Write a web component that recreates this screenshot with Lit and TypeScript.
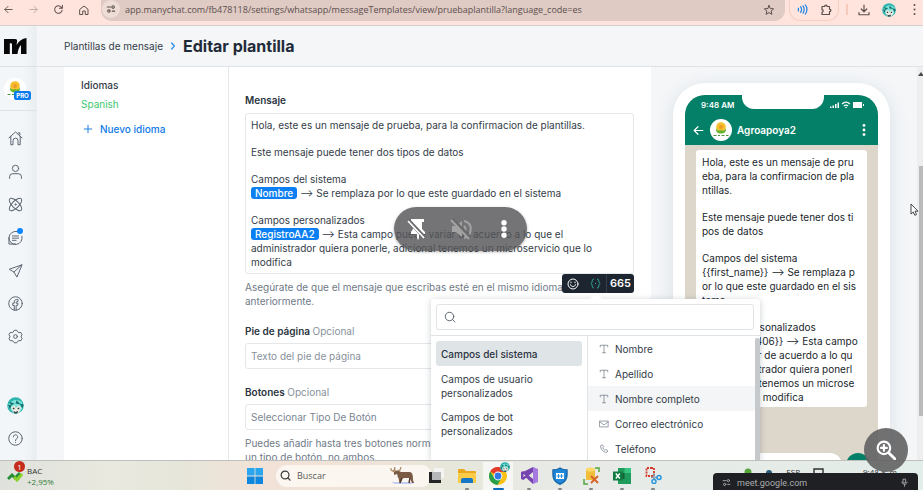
import { LitElement, html, css, svg } from "lit";
import { customElement } from "lit/decorators.js";

const line = (size: number, body: unknown, width = 1.5) => html`<svg
  width=${size} height=${size} viewBox="0 0 24 24" fill="none" stroke="currentColor"
  stroke-width=${width} stroke-linecap="round" stroke-linejoin="round" aria-hidden="true">${body}</svg>`;

const shapes = {
  back: svg`<path d="M20 12H4M11 5l-7 7 7 7"/>`,
  forward: svg`<path d="M4 12h16M13 5l7 7-7 7"/>`,
  reload: svg`<path d="M19.5 9A8.2 8.2 0 1 0 20 13.500M20.500 3v6.500H14"/>`,
  house: svg`<path d="M4 10.500 12 4l8 6.500V21h-5.500v-7h-5v7H4z"/>`,
  tune: svg`<path d="M3 7h8M15 17h6"/><circle cx="17" cy="7" r="3"/><circle cx="7" cy="17" r="3"/>`,
  star: svg`<path d="m12 3 2.700 6.100 6.600.6-5 4.400 1.500 6.500L12 17.200l-5.800 3.400 1.500-6.500-5-4.400 6.600-.6z"/>`,
  puzzle: svg`<path d="M4 5h5.500c-.6-3.500 5-3.500 4.500 0H19v5.500c3.500-.5 3.500 5 0 4.500V21H4v-5c3.200.3 3.200-5 0-4.700z"/>`,
  download: svg`<path d="M12 2v13M6.500 10l5.500 5.500L17.500 10M2 17v4.500h20V17"/>`,
  home: svg`<path d="M1.500 11 12 1.500 22.500 11M4.500 8.500V22H8v-6.500a4 4 0 0 1 8 0V22h3.500V8.500M16.500 3H19v3"/>`,
  person: svg`<circle cx="12" cy="7" r="5"/><path d="M2.500 23v-2.500a5 5 0 0 1 5-5h9a5 5 0 0 1 5 5V23"/>`,
  atom: svg`<ellipse cx="12" cy="12" rx="13" ry="5.500" transform="rotate(45 12 12)"/><ellipse cx="12" cy="12" rx="13" ry="5.500" transform="rotate(-45 12 12)"/><circle cx="12" cy="12" r="1"/>`,
  chat: svg`<path d="M14 2.300A10.500 10.500 0 1 0 22.300 10M1.500 12v10.500H12M7 9.500h10M7 13h10M7 16.500h6"/>`,
  plane: svg`<path d="M22 3 2 10l7.500 4.500L14 22zM22 3 9.500 14.500"/>`,
  facebook: svg`<circle cx="12" cy="12" r="10.800"/><path d="M10 22.500V15H7.500v-3.500H10V9.500c0-3 2-4.500 6-3.800V9c-2.500-.4-3 .2-3 2.500h3l-.5 3.500H13v7.500"/>`,
  gear: svg`<path d="M8.500 4.500 10 2h4l1.500 2.500 2 1.200 3-.1 2 3.500-1.500 2.400v1.300l1.500 2.400-2 3.500-3-.1-2 1.200L14 22h-4l-1.500-2.200-2-1.200-3 .1-2-3.500L3 12.800v-1.300L1.500 9.100l2-3.500 3 .1z"/><circle cx="12" cy="12" r="3"/>`,
  help: svg`<circle cx="12" cy="12" r="10.800"/><path d="M8.500 9.500a3.500 3.500 0 1 1 5.500 2.800c-1.500 1-2 1.500-2 3M12 18v.3"/>`,
  plus: svg`<path d="M12 3v18M3 12h18"/>`,
  chevron: svg`<path d="m8 3 8 9-8 9"/>`,
  search: svg`<circle cx="11" cy="11" r="8.500"/><path d="m17 17 5 5"/>`,
  letter: svg`<path d="M3 7V3h18v4M12 3v18M8.500 21h7"/>`,
  mail: svg`<path d="M2 5h20v14H2zM2 7l10 7 10-7"/>`,
  phone: svg`<path d="M7.500 2.500 4 4c-1.500 7 7 17 15 16l2.500-3.500-5-3.500-2.500 2c-2.500-1.500-4-3.500-5-6L10.500 7z"/>`,
  smile: svg`<circle cx="12" cy="12" r="10"/><path d="M7 13.500c1 5 9 5 10 0M8 8v1.500M16 8v1.500"/>`,
  braces: svg`<path d="M8 2C3 2 6 10 2.500 12 6 14 3 22 8 22M16 2c5 0 2 8 5.500 10C18 14 21 22 16 22M12 11.500v1"/>`,
};

const dots = (w: number, h: number, r: number) => html`<svg width=${w} height=${h} viewBox="0 0 ${w} ${h}" fill="currentColor" aria-hidden="true">
  <circle cx=${w / 2} cy=${r} r=${r}/><circle cx=${w / 2} cy=${h / 2} r=${r}/><circle cx=${w / 2} cy=${h - r} r=${r}/></svg>`;

const portrait = (s: number) => html`<svg width=${s} height=${s} viewBox="0 0 16 16" aria-hidden="true">
  <circle cx="8" cy="8" r="7.800" fill="#2fb5b0"/><path d="M1 9c2-6 8-8 13-4l1 5-3 4-4-5-4 4z" fill="#7fe3dc"/>
  <path d="M4 9.500 7 8l1.500 2L11 8l2 2-1.500 4.500h-6z" fill="#f3ebe2"/><path d="M2 4.500 7 6 4 8zM9 3l4 4-5-1z" fill="#11756f"/>
  <path d="M1 7.500h3L3 12zM12 6l3.500 1-1 4z" fill="#0e6f6b"/>
  <path d="M5.500 10h1.500v1.500H5.500zM10 10h1.500v1.500H10z" fill="#17403f"/><path d="m6 13 2 1 2.500-1-1 2.500H7z" fill="#31424c"/></svg>`;

const farm = (s: number) => html`<svg width=${s} height=${s} viewBox="0 0 22 22" aria-hidden="true">
  <circle cx="11" cy="11" r="11" fill="#fff"/><circle cx="11" cy="8" r="4.800" fill="#f5c02c"/><circle cx="11" cy="8" r="2" fill="#ee9a2b"/>
  <path d="M6 9c1 3 3 3 5 2 2 1 4 1 5-2 .5 4-1.500 5.500-5 5.500S5.500 13 6 9z" fill="#65b32e"/>
  <path d="M3.500 16.500h3M8 16.500h2M11.500 16.500h3M16 16.500h2.500" stroke="#4c8f3c" stroke-width="1.200"/></svg>`;

@customElement("app-root")
export class AppRoot extends LitElement {
  static styles = css`
    :host { display: grid; grid-template-rows: 26px minmax(0, 1fr) 30px; height: 100vh; overflow: hidden; position: relative;
      font-family: Inter, "Liberation Sans", sans-serif; font-size: 10px; line-height: 14px; color: #333c48; background: #f4f6f8; }
    * { box-sizing: border-box; }
    svg { display: block; flex: none; }
    button, input, select { font: inherit; color: inherit; border: 0; background: none; padding: 0; margin: 0; outline: 0; }
    button { display: flex; align-items: center; justify-content: center; text-align: left; }
    a { color: inherit; text-decoration: none; }
    p { margin: 0; }

    .browser { display: flex; align-items: start; background: #fee4dc; border-bottom: 1px solid #d6cfcf; color: #5c504d; }
    .browser button { height: 19px; }
    .history { display: flex; }
    .history button { width: 25px; justify-content: start; padding-left: 3px; }
    .browser .off { color: #b9a8a3; }
    .address { flex: 1; min-width: 0; height: 21px; margin: 0 4px 0 1px; padding-right: 10px; display: flex; align-items: start; background: #dfcac4; border-radius: 0 0 11px 11px; }
    .address .site { width: 18px; height: 18px; margin: 0 5px 0 1px; background: #eedcd7; border-radius: 9px; }
    .address input { flex: 1; min-width: 0; height: 19px; font-family: "Open Sans", "Noto Sans", sans-serif; font-size: 9px; color: #5b4f4d; }
    .ext { display: flex; height: 21px; border: 1px solid #f5cfc4; border-top: 0; border-radius: 0 0 11px 11px; }
    .ext button { width: 24px; }
    .ext .sound { color: #1a84e8; }
    .bar { width: 2px; height: 11px; margin: 4px 7px 0; background: #f7c9bd; }
    .account-tools { display: flex; gap: 7px; }
    .account-tools button { width: 18px; }

    .app { display: grid; grid-template-columns: 37px minmax(0, 1fr); min-height: 0; }
    .side { display: flex; flex-direction: column; min-height: 0; padding-bottom: 5px; color: #5b6672; background: linear-gradient(90deg, #f3f6f8 65%, #e9eef0 96%, #f0f3f5); }
    .side .brand { height: 41px; display: flex; align-items: center; padding-left: 4px; border-bottom: 1px solid #dde2e6; color: #080808; }
    .side .account { position: relative; height: 44px; display: flex; align-items: center; padding-left: 4px; border-bottom: 1px solid #dde2e6; }
    .pro { position: absolute; left: 14px; top: 24px; width: 17px; height: 9px; border-radius: 2px; background: #0a7cf0; color: #fff; font-size: 6px; line-height: 9px; font-weight: 700; text-align: center; }
    .side nav { display: flex; flex-direction: column; padding-top: 11px; }
    .side .foot { margin-top: auto; }
    .side .item { position: relative; width: 30px; height: 33px; display: flex; align-items: center; justify-content: center; }
    .dot { position: absolute; left: 17px; top: 7px; width: 6px; height: 6px; border-radius: 3px; background: #0a84ff; }

    .page { display: grid; grid-template-rows: 41px minmax(0, 1fr); min-width: 0; min-height: 0; }
    .crumbs { display: flex; align-items: center; gap: 6px; padding-left: 27px; border-bottom: 1px solid #dfe3e7; }
    .crumbs svg { color: #2f8fe6; }
    .crumbs h1 { margin: 0; font-size: 16px; line-height: 20px; font-weight: 700; color: #222b38; }
    .body { display: grid; grid-template-columns: 165px minmax(0, 1fr) 266px 6px; padding-left: 27px; min-height: 0; overflow: hidden; }
    .langs { padding: 11px 17px; background: #fff; border-right: 1px solid #e6e9ec; display: flex; flex-direction: column; align-items: start; gap: 5px; }
    .langs h2 { margin: 0; font-size: 10px; font-weight: 500; color: #333c48; }
    .langs .active { color: #3ec86f; }
    .langs button { gap: 7px; margin-top: 6px; padding-left: 2px; color: #0f7ae5; font-weight: 500; }

    .form { padding: 26px 17px 0 16px; background: #fff; position: relative; z-index: 2; }
    .label { display: block; font-weight: 600; color: #2b3441; }
    .label span { font-weight: 400; color: #87919b; }
    .editor { position: relative; margin-top: 6px; }
    .text { min-height: 161px; padding: 4px 26px 4px 5px; border: 1px solid #e4e7ea; border-radius: 3px; display: flex; flex-direction: column; gap: 13px; outline: 0; }
    .chip { display: inline-block; height: 12px; padding: 0 4px; line-height: 12px; border-radius: 3px; background: #0c7ff2; color: #fff; font-weight: 500; }
    .tools { position: absolute; right: 0; top: 100%; height: 19px; display: flex; border-radius: 3px; background: #1c2530; color: #fff; font-weight: 600; z-index: 1; }
    .tools button { width: 22px; }
    .tools .fields { color: #35b3a0; }
    .tools output { width: 28px; font-size: 11px; line-height: 19px; text-align: center; border-left: 1px solid #343e4a; }
    .hint { margin: 6px 0 16px; color: #6f7a86; white-space: nowrap; }
    .field { display: block; width: 100%; height: 26px; margin: 5px 0 16px; padding: 0 5px; border: 1px solid #e4e7ea; border-radius: 3px; background: #fff; appearance: none; color: #7b8692; }
    .field::placeholder { color: #87919b; opacity: 1; }
    .field.pick { margin-bottom: 0; }

    .picker { position: absolute; right: -126px; top: 186px; width: 329px; background: #fff; border-radius: 3px; box-shadow: 0 1px 6px rgba(40, 55, 70, .25); z-index: 2; }
    .picker::before { content: ""; position: absolute; left: 159px; top: -5px; border: 6px solid transparent; border-top: 0; border-bottom: 5px solid #fff; }
    .find { display: flex; align-items: center; gap: 8px; height: 26px; margin: 5px 6px 5px 5px; padding-left: 7px; border: 1px solid #e0e4e7; border-radius: 3px; color: #4d5763; }
    .find input { flex: 1; min-width: 0; height: 20px; }
    .cols { display: grid; grid-template-columns: 157px 1fr 5px; border-top: 1px solid #e0e4e7; }
    .groups { padding: 5px; border-right: 1px solid #e0e4e7; display: flex; flex-direction: column; }
    .groups button { justify-content: start; padding: 5px; border-radius: 3px; min-height: 38px; }
    .groups .on { min-height: 25px; margin-bottom: 1px; background: #dfe4e7; font-weight: 500; color: #2b3441; }
    .options button { width: 100%; height: 25px; justify-content: start; gap: 6px; padding-left: 11px; }
    .options svg { color: #76808a; }
    .options .on { background: #f3f5f6; }
    .thumb { margin-top: 2px; background: #c6c9cc; border-radius: 2px 2px 0 0; }

    .preview { padding: 16px 27px 0 22px; background: #f4f6f8; overflow: hidden; }
    .phone { padding: 12px; background: #fff; border-radius: 32px; box-shadow: 0 4px 18px rgba(90, 110, 130, .16); }
    .screen { border-radius: 20px; overflow: hidden; background: #ddd6cb; }
    .head { background: #058068; color: #fff; }
    .status { position: relative; height: 20px; display: flex; align-items: center; justify-content: space-between; padding: 0 14px 0 16px; font-size: 8px; line-height: 10px; font-weight: 600; }
    .notch { position: absolute; left: 57px; right: 54px; top: 0; height: 14px; border-radius: 0 0 12px 12px; background: #fff; }
    .contact { height: 30px; display: flex; align-items: center; gap: 5px; padding: 0 12px 0 7px; font-weight: 600; }
    .contact strong { flex: 1; font-weight: 600; }
    .bubble { margin: 5px 11px 0; padding: 5px 6px 3px; border-radius: 3px; background: #fff; color: #20262c; display: flex; flex-direction: column; gap: 13px; }
    .bubble p { white-space: pre; }
    .reply { display: flex; gap: 4px; margin-top: 46px; padding: 0 8px 12px 6px; }
    .reply input { flex: 1; min-width: 0; height: 24px; border-radius: 12px; background: #fff; }
    .reply button { width: 24px; height: 24px; border-radius: 12px; background: #058068; color: #fff; }

    .scroll { background: #eceef0; display: flex; flex-direction: column; align-items: end; padding: 5px 0; color: #4b4b4b; }
    .scroll i { width: 4px; height: 62%; background: #b9bbbd; margin: 90px 0 auto; }

    .meet { position: absolute; left: 394px; top: 207px; width: 133px; height: 44px; display: flex; align-items: center; justify-content: space-between; padding: 0 12px; border-radius: 22px; background: rgba(86, 86, 88, .82); color: #fff; box-shadow: 0 1px 3px rgba(0, 0, 0, .3); z-index: 5; }
    .meet .dim { color: #a2a2a3; }
    .meet button { width: 22px; height: 30px; }
    .lens { position: absolute; right: 15px; bottom: 18px; width: 44px; height: 44px; border-radius: 22px; background: rgba(98, 98, 99, .9); color: #fff; z-index: 7; }
    .source { position: absolute; right: 5px; bottom: 0; width: 205px; height: 17px; display: flex; align-items: center; gap: 6px; padding: 2px 9px 0; border-radius: 4px 4px 0 0; background: #1f2023; color: #a9abad; z-index: 6; font-family: Roboto, "Noto Sans", sans-serif; font-size: 9px; }
    .source span { flex: 1; }
    .mouse { position: absolute; left: 910px; top: 203px; z-index: 8; }

    .tasks { display: flex; align-items: center; border-top: 1px solid #bfc0bd; background: linear-gradient(90deg, #dfe1dc 0, #e9e9df 12%, #e6e5da 20%, #f2e2d7 28%, #eee3d8 42%, #e6e8dc 50%, #e8eae6 60%, #e3ede9 100%); font-family: "Open Sans", "Noto Sans", sans-serif; font-size: 9px; line-height: 11px; position: relative; z-index: 4; }
    .widget { position: relative; display: flex; align-items: center; gap: 4px; width: 247px; padding-left: 7px; color: #30302f; font-size: 8px; }
    .widget .up { color: #2e7b34; }
    .count { position: absolute; left: 14px; top: -4px; width: 11px; height: 11px; border-radius: 6px; background: #c42b1c; color: #fff; text-align: center; font-size: 8px; }
    .seek { display: flex; align-items: center; gap: 6px; width: 156px; height: 22px; margin: 0 0 0 13px; padding: 0 16px 0 4px; border-radius: 11px; background: #fbf6f0; color: #3a3a3a; }
    .seek input { flex: 1; min-width: 0; height: 18px; }
    .seek input::placeholder { color: #5c5856; opacity: 1; }
    .pins { display: flex; gap: 1px; margin-left: -11px; }
    .pins button { position: relative; width: 30px; height: 28px; }
    .pins .run::after { content: ""; position: absolute; left: 13px; bottom: 0; width: 4px; height: 2px; border-radius: 1px; background: #84878a; }
    .pins .front { background: #f6f7f5; }
    .pins .front::after { left: 10px; width: 11px; background: #0f6cbd; }
    .face { position: absolute; right: 3px; top: 0; }
    .tray { margin-left: auto; align-self: start; display: flex; align-items: center; gap: 13px; padding: 5px 24px 0 0; font-size: 8px; color: #30302f; }
    .tray .clock { margin-left: 26px; }
  `;

  private nav(icon: keyof typeof shapes, label: string, dot = false) {
    return html`<a class="item" href="#" aria-label=${label}>${line(15, shapes[icon], 1.6)}${dot ? html`<i class="dot"></i>` : ""}</a>`;
  }

  private browser() {
    return html`<header class="browser">
      <div class="history">
        <button aria-label="Atrás">${line(11, shapes.back, 2)}</button>
        <button class="off" aria-label="Adelante">${line(11, shapes.forward, 2)}</button>
        <button aria-label="Recargar">${line(11, shapes.reload, 2.2)}</button>
        <button aria-label="Inicio">${line(12, shapes.house, 2)}</button>
      </div>
      <div class="address">
        <button class="site" aria-label="Información del sitio">${line(10, shapes.tune, 2.6)}</button>
        <input aria-label="Dirección" value="app.manychat.com/fb478118/settings/whatsapp/messageTemplates/view/pruebaplantilla?language_code=es">
        <button aria-label="Favorito">${line(12, shapes.star, 2)}</button>
      </div>
      <div class="ext">
        <button class="sound" aria-label="Audio">${line(11, svg`<path d="M3 9v6M8 6c2.500 3 2.500 9 0 12M13 4c3.500 4 3.500 12 0 16M18 2c5 5 5 15 0 20"/>`, 2.6)}</button>
        <button aria-label="Extensiones">${line(12, shapes.puzzle, 2.4)}</button>
      </div>
      <i class="bar"></i>
      <div class="account-tools">
        <button aria-label="Descargas">${line(12, shapes.download, 2.4)}</button>
        <button aria-label="Perfil">${portrait(14)}</button>
        <button aria-label="Menú">${dots(3, 11, 1)}</button>
      </div>
    </header>`;
  }

  private sidebar() {
    return html`<aside class="side">
      <a class="brand" href="#" aria-label="Manychat"><svg width="23" height="17" viewBox="0 0 23 17" fill="currentColor"><path d="M0 1h11c2 0 2.400 1 2 3l-.5 3C15 3 18 .5 22.500 0v16H17V7c-2 2-3 5-3.500 9H8V6.500C8 5.500 7.500 5.200 6.500 5.200H5.800V16H0z"/></svg></a>
      <div class="account">${farm(22)}<span class="pro">PRO</span></div>
      <nav>
        ${this.nav("home", "Inicio")}${this.nav("person", "Contactos")}${this.nav("atom", "Automatización")}
        ${this.nav("chat", "Chat en vivo", true)}${this.nav("plane", "Difusión")}${this.nav("facebook", "Anuncios")}${this.nav("gear", "Ajustes")}
      </nav>
      <div class="foot">
        <a class="item" href="#" aria-label="Perfil">${portrait(17)}</a>${this.nav("help", "Ayuda")}
      </div>
    </aside>`;
  }

  private picker() {
    const option = (icon: keyof typeof shapes, label: string, on = false) =>
      html`<button class=${on ? "on" : ""}>${line(10, shapes[icon], 1.8)}${label}</button>`;
    return html`<div class="picker">
      <div class="find">${line(12, shapes.search, 1.8)}<input type="search" aria-label="Buscar campo"></div>
      <div class="cols">
        <div class="groups">
          <button class="on">Campos del sistema</button>
          <button>Campos de usuario<br>personalizados</button>
          <button>Campos de bot<br>personalizados</button>
        </div>
        <div class="options">
          ${option("letter", "Nombre")}${option("letter", "Apellido")}${option("letter", "Nombre completo", true)}
          ${option("mail", "Correo electrónico")}${option("phone", "Teléfono")}
        </div>
        <div class="thumb"></div>
      </div>
    </div>`;
  }

  private form() {
    return html`<section class="form">
      <span class="label" id="msg">Mensaje</span>
      <div class="editor">
        <div class="text" role="textbox" aria-multiline="true" aria-labelledby="msg" contenteditable="true" spellcheck="false">
          <p>Hola, este es un mensaje de prueba, para la confirmacion de plantillas.</p>
          <p>Este mensaje puede tener dos tipos de datos</p>
          <p>Campos del sistema<br><span class="chip">Nombre</span> ⟶ Se remplaza por lo que este guardado en el sistema</p>
          <p>Campos personalizados<br><span class="chip">RegistroAA2</span> ⟶ Esta campo puede variar de acuerdo a lo que el<br>administrador quiera ponerle, adicional tenemos un microservicio que lo<br>modifica</p>
        </div>
        <div class="tools">
          <button aria-label="Emoji">${line(12, shapes.smile, 2)}</button>
          <button class="fields" aria-label="Campos">${line(11, shapes.braces, 2)}</button>
          <output>665</output>
        </div>
        ${this.picker()}
      </div>
      <p class="hint">Asegúrate de que el mensaje que escribas esté en el mismo idioma elegido<br>anteriormente.</p>
      <label class="label" for="footer">Pie de página <span>Opcional</span></label>
      <input class="field" id="footer" placeholder="Texto del pie de página">
      <label class="label" for="kind">Botones <span>Opcional</span></label>
      <select class="field pick" id="kind"><option>Seleccionar Tipo De Botón</option></select>
      <p class="hint">Puedes añadir hasta tres botones normales o dos de acción. Usa<br>un tipo de botón, no ambos.</p>
    </section>`;
  }

  private preview() {
    return html`<section class="preview"><div class="phone"><div class="screen">
      <div class="head">
        <div class="status"><span>9:48 AM</span><i class="notch"></i>
          <svg width="34" height="8" viewBox="0 0 34 8" fill="#fff"><path d="M0 5.500h1.500V7H0zM2.500 4.500H4V7H2.500zM5 3h1.500v4H5zM7.500 1.500H9V7H7.500zM23 1h9v6h-9zM33 3h1v2h-1z"/><path d="M12 3c2.500-2.300 5.500-2.300 8 0M13.800 5c1.500-1.300 3-1.300 4.400 0" stroke="#fff" stroke-width="1.200" fill="none"/><circle cx="16" cy="6.500" r=".8"/></svg>
        </div>
        <div class="contact">${line(13, shapes.back, 2.2)}${farm(22)}<strong>Agroapoya2</strong>${dots(4, 12, 1.4)}</div>
      </div>
      <div class="bubble">
        <p>Hola, este es un mensaje de pru
eba, para la confirmacion de pla
ntillas.</p>
        <p>Este mensaje puede tener dos ti
pos de datos</p>
        <p>Campos del sistema
{{first_name}} ⟶ Se remplaza p
or lo que este guardado en el sis
tema</p>
        <p>Campos personalizados
{{cuf_11883406}} ⟶ Esta campo
puede variar de acuerdo a lo qu
e el administrador quiera ponerl
e, adicional tenemos un microse
rvicio que lo modifica</p>
      </div>
      <div class="reply"><input aria-label="Respuesta"><button aria-label="Micrófono">${line(10, svg`<path d="M9 4h6v9H9zM5 11c0 8 14 8 14 0"/>`, 2)}</button></div>
    </div></div></section>`;
  }

  private taskbar() {
    return html`<footer class="tasks">
      <div class="widget">
        <svg width="16" height="12" viewBox="0 0 16 12"><path d="m1 9 4-4 3 3 5-5" fill="none" stroke="#268d36" stroke-width="3"/><path d="m7 7 3 3 5-6" fill="none" stroke="#8bcf2b" stroke-width="3"/></svg>
        <span class="count">1</span><div>BAC<br><span class="up">+2,95%</span></div>
      </div>
      <button aria-label="Inicio"><svg width="16" height="16" viewBox="0 0 16 16" fill="#0f87de"><path d="M0 0h7.600v7.600H0zM8.400 0H16v7.600H8.400z" fill="#2ba5ee"/><path d="M0 8.400h7.600V16H0zM8.400 8.400H16V16H8.400z"/></svg></button>
      <label class="seek">${line(11, shapes.search, 2.6)}<input aria-label="Buscar" placeholder="Buscar">
        <svg width="26" height="18" viewBox="0 0 26 18"><path d="M1 15h24l-3 2H5z" fill="#c3cdf3"/><path d="M4 5c2-2 5-1 7 0l9 0c3 1 3 4 3 8l1 3h-2l-2-5-6 0-3 1 0 4h-1.500l-1-5C7 10 8 8 7 7L4 8z" fill="#7b5b44"/><path d="M4 5 1 3V1M4 4 5 0M7 4l3-1 1-3M3 3.500 6 3" stroke="#a98763" stroke-width="1.200" fill="none"/><path d="m12 11-2 5M20 11l-1 5" stroke="#4d382c" stroke-width="1.500"/></svg>
      </label>
      <div class="pins">
        <button aria-label="Vista de tareas"><svg width="15" height="15" viewBox="0 0 15 15"><path d="M5 0h10v10H5z" fill="#f4f4f3"/><path d="M0 4h12v11H0z" fill="#242424"/><path d="M3 4h9v8H3z" fill="#b5b7b8"/></svg></button>
        <button class="run" aria-label="Archivos"><svg width="18" height="16" viewBox="0 0 18 16"><path d="M0 2q0-1 1-1h5l2 2h9q1 0 1 1v10H0z" fill="#e9a820"/><path d="M0 5h18v10H0z" fill="#fccc48"/><path d="M3 15v-3q0-2 2-2h8q2 0 2 2v3z" fill="#1677c9"/></svg></button>
        <button class="run front" aria-label="Chrome"><svg width="18" height="18" viewBox="0 0 18 18"><circle cx="9" cy="9" r="9" fill="#fbc116"/><path d="M9 9 1.200 4.500A9 9 0 0 1 16.800 4.500L17 5H9z" fill="#e33b2e"/><path d="M1.200 4.500A9 9 0 0 0 8.500 18l4-7L9 9 5.500 11z" fill="#28a04b"/><circle cx="9" cy="9" r="4.400" fill="#fff"/><circle cx="9" cy="9" r="3.400" fill="#3478e5"/></svg><span class="face">${portrait(10)}</span></button>
        <button class="run" aria-label="Visual Studio"><svg width="17" height="17" viewBox="0 0 17 17"><path d="M12 0 17 2v13l-5 2z" fill="#a57be0"/><path d="M12 0v5L2.500 13 0 12V5l2.500-1L12 12v5L0 6" fill="#7544ae"/><path d="M2.500 7v3L4.500 8.500z" fill="#e8eae6"/></svg></button>
        <button class="run" aria-label="Seguridad"><svg width="16" height="18" viewBox="0 0 16 18"><path d="M8 1c2 1.500 4.500 2 7 2v5c0 5-3 7.500-7 9.300C4 15.500 1 13 1 8V3c2.500 0 5-.5 7-2z" fill="#2387d8" stroke="#1767aa" stroke-width="1.400"/><path d="M4 6h8v6H4z" fill="#fff"/><path d="M4.500 9h7M6.500 7v4M9.500 7v4" stroke="#2387d8" stroke-width=".9"/></svg></button>
        <button class="run" aria-label="Base de datos"><svg width="17" height="18" viewBox="0 0 17 18"><path d="M3 2h9v11H3z" fill="#f2bd38"/><ellipse cx="7.500" cy="2.500" rx="4.500" ry="2" fill="#ffd968"/><path d="M1 12v5h4M12 1h4v4" fill="none" stroke="#51a63e" stroke-width="1.500"/><path d="m8 9 7 7m0-7-7 7" stroke="#d9652b" stroke-width="2"/></svg></button>
        <button class="run" aria-label="Excel"><svg width="18" height="16" viewBox="0 0 18 16"><path d="M5 0h13v16H5z" fill="#1f9c5b"/><path d="M11.500 0H18v5h-6.500z" fill="#36c481"/><path d="M5 5h6.500v6H5z" fill="#15623a"/><path d="M0 3.500h9.500v9H0z" fill="#107c41"/><path d="m2.800 5.500 4 5m0-5-4 5" stroke="#fff" stroke-width="1.400"/></svg></button>
        <button class="run" aria-label="Recortes"><svg width="17" height="17" viewBox="0 0 17 17" fill="none"><path d="M7 1H1.500v8H9V1H7" stroke="#d43b2a" stroke-width="1.800" stroke-dasharray="2 1"/><path d="M9 6v7M6 10.500h6" stroke="#8ca0ad" stroke-width="1.600"/><circle cx="14" cy="10.500" r="2" stroke="#2496dd" stroke-width="1.500"/><circle cx="9" cy="14.500" r="2" stroke="#2496dd" stroke-width="1.500"/></svg></button>
      </div>
      <div class="tray">
        <svg width="8" height="8" viewBox="0 0 8 8"><circle cx="4" cy="4" r="3.500" fill="#57a63a"/></svg>
        <svg width="8" height="8" viewBox="0 0 8 8"><circle cx="4" cy="5" r="3" fill="#2a5d7c"/></svg>
        <span>ESP</span>
        <svg width="11" height="8" viewBox="0 0 11 8" fill="none" stroke="#30302f" stroke-width="1.400"><path d="M1 1h9v6H1z"/></svg>
        <span class="clock">9:48 a. m.</span>
      </div>
    </footer>`;
  }

  render() {
    return html`
      ${this.browser()}
      <main class="app">
        ${this.sidebar()}
        <div class="page">
          <div class="crumbs"><a href="#">Plantillas de mensaje</a>${line(8, shapes.chevron, 4)}<h1>Editar plantilla</h1></div>
          <div class="body">
            <section class="langs"><h2>Idiomas</h2><a class="active" href="#">Spanish</a><button>${line(10, shapes.plus, 2.2)}Nuevo idioma</button></section>
            ${this.form()}
            ${this.preview()}
            <div class="scroll">
              <svg width="5" height="4" viewBox="0 0 5 4" fill="currentColor"><path d="m3 0 3 4H0z"/></svg><i></i>
              <svg width="5" height="4" viewBox="0 0 5 4" fill="currentColor"><path d="m3 4 3-4H0z"/></svg>
            </div>
          </div>
        </div>
      </main>
      ${this.taskbar()}
      <div class="meet">
        <button aria-label="Desfijar"><svg width="20" height="22" viewBox="0 0 20 22" fill="currentColor"><path d="M4 1h13v3h-2v7l3 3v2h-6v4l-1 2-1-2v-4H4v-2l2-3V4H4z"/><path d="m1 2 17 18" stroke="#6b6b6d" stroke-width="4"/><path d="m1 3 16 17" stroke="currentColor" stroke-width="1.800"/></svg></button>
        <button class="dim" aria-label="Silenciar"><svg width="22" height="22" viewBox="0 0 22 22" fill="currentColor"><path d="M2 8h4l6-5v16l-6-5H2z"/><path d="M14 8q3 3 0 6M14 3q9 2 6 12-2 4-6 5" fill="none" stroke="currentColor" stroke-width="2"/><path d="m2 1 18 19" stroke="#6b6b6d" stroke-width="4"/><path d="m1 2 18 19" stroke="currentColor" stroke-width="2"/></svg></button>
        <button aria-label="Más">${dots(6, 18, 2.7)}</button>
      </div>
      <div class="source">${line(9, shapes.tune, 2.4)}<span>meet.google.com</span>${line(9, svg`<path d="M9 3h6v10H9zM5 11c0 8 14 8 14 0M12 17v5"/>`, 2.4)}</div>
      <button class="lens" aria-label="Acercar">${line(20, svg`<circle cx="9.500" cy="9.500" r="7.500"/><path d="m15.500 15.500 7 7" stroke-width="3.400"/><path d="M9.500 6v7M6 9.500h7"/>`, 2.6)}</button>
      <svg class="mouse" width="9" height="13" viewBox="0 0 9 13"><path d="M1 1v10l2.300-2 1.500 3.300 1.700-.8L5 8.200h3z" fill="#fff" stroke="#333" stroke-width=".9"/></svg>
    `;
  }
}
